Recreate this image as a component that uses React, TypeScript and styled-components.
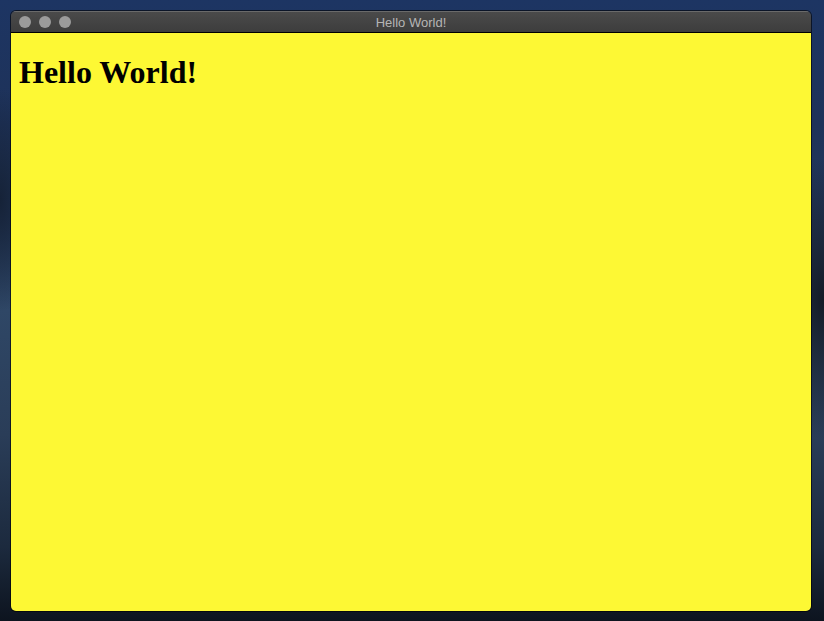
import React from 'react'
import styled, { createGlobalStyle } from 'styled-components';

const GlobalStyle = createGlobalStyle`
  html, body {
    margin: 0;
    padding: 0;
    background: #13233f;
  }
`;

const Desktop = styled.div`
  width: 824px;
  height: 621px;
  box-sizing: border-box;
  padding: 11px 13px 10px 11px;
  overflow: hidden;
  background:
    radial-gradient(ellipse 60px 160px at 0px 200px, rgba(20, 32, 52, 0.9), transparent 70%),
    radial-gradient(ellipse 90px 200px at 824px 300px, rgba(18, 24, 34, 0.95), transparent 70%),
    linear-gradient(180deg, #1d3563 0%, #1e3259 20%, #24385a 35%, #2f4766 50%, #2a3d58 70%, #1c2a3e 88%, #0d141f 100%);
`;

const Window = styled.div`
  width: 800px;
  height: 600px;
  display: flex;
  flex-direction: column;
  border-radius: 5px;
  overflow: hidden;
  box-shadow: 0 0 0 1px rgba(0, 0, 0, 0.6);
`;

const TitleBar = styled.div`
  position: relative;
  height: 22px;
  flex: none;
  display: flex;
  align-items: center;
  justify-content: center;
  background: linear-gradient(180deg, #4a4a4a 0%, #3d3d3d 100%);
  border-top: 1px solid #6a6a6a;
  border-bottom: 1px solid #000;
  box-sizing: border-box;
`;

const Lights = styled.div`
  position: absolute;
  left: 8px;
  top: 0;
  bottom: 0;
  display: flex;
  align-items: center;
  gap: 8px;
`;

const Light = styled.span`
  width: 12px;
  height: 12px;
  border-radius: 50%;
  background: #9b9b9b;
`;

const Title = styled.span`
  font-family: "Liberation Sans", Arial, sans-serif;
  font-size: 13px;
  color: #b5b5b5;
`;

const Content = styled.div`
  flex: 1;
  background: #fdf834;
  padding: 8px;
  overflow: hidden;
`;

const Heading = styled.h1`
  margin: 13px 0 0;
  font-family: "Liberation Serif", "Times New Roman", serif;
  font-size: 32px;
  font-weight: bold;
  color: #000;
`;

const App = () => (
  <>
    <GlobalStyle />
    <Desktop>
      <Window>
        <TitleBar>
          <Lights>
            <Light />
            <Light />
            <Light />
          </Lights>
          <Title>Hello World!</Title>
        </TitleBar>
        <Content>
          <Heading>Hello World!</Heading>
        </Content>
      </Window>
    </Desktop>
  </>
);

export default App;
